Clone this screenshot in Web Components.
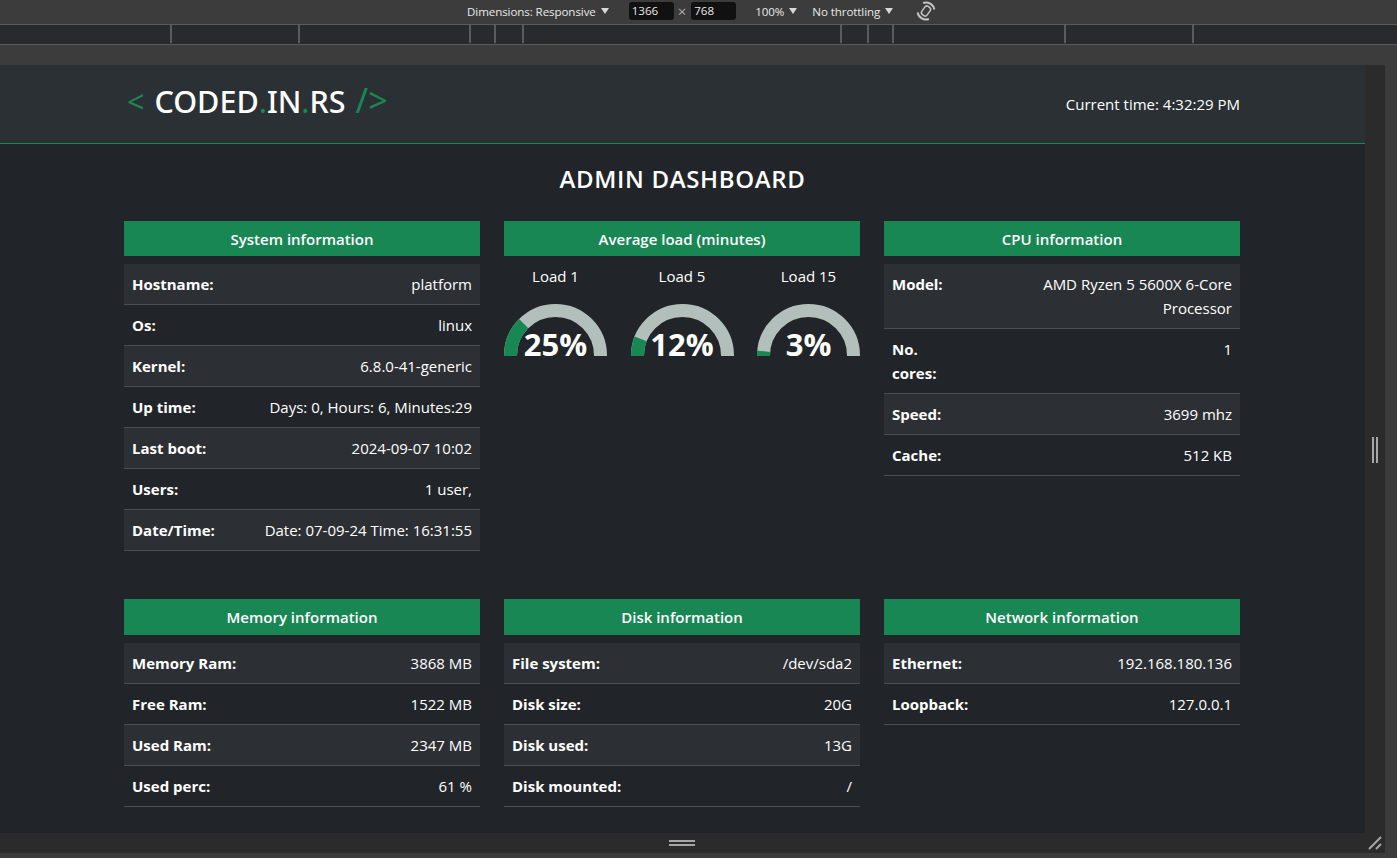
<!DOCTYPE html>
<html lang="en">
<head>
<meta charset="utf-8">
<title>Admin dashboard</title>
<style>
  html, body { margin: 0; height: 100%; background: #3c3c3c; overflow: hidden; }
  body { font-family: "Open Sans", "Noto Sans", sans-serif; }
</style>
</head>
<body>
<devtools-frame>
  <admin-page>
    <site-header time="Current time: 4:32:29 PM"></site-header>
    <page-title>ADMIN DASHBOARD</page-title>
    <card-grid>
      <info-card title="System information">
        <info-row label="Hostname:">platform</info-row>
        <info-row label="Os:">linux</info-row>
        <info-row label="Kernel:">6.8.0-41-generic</info-row>
        <info-row label="Up time:">Days: 0, Hours: 6, Minutes:29</info-row>
        <info-row label="Last boot:">2024-09-07 10:02</info-row>
        <info-row label="Users:">1 user,</info-row>
        <info-row label="Date/Time:">Date: 07-09-24 Time: 16:31:55</info-row>
      </info-card>
      <info-card title="Average load (minutes)">
        <load-gauges>
          <load-gauge label="Load 1" value="25"></load-gauge>
          <load-gauge label="Load 5" value="12"></load-gauge>
          <load-gauge label="Load 15" value="3"></load-gauge>
        </load-gauges>
      </info-card>
      <info-card title="CPU information" style="--label-width: 60px; --label-wrap: normal; --value-width: 212px">
        <info-row label="Model:">AMD Ryzen 5 5600X 6-Core Processor</info-row>
        <info-row label="No. cores:">1</info-row>
        <info-row label="Speed:">3699 mhz</info-row>
        <info-row label="Cache:">512 KB</info-row>
      </info-card>
      <info-card title="Memory information" style="--head-height: 36px">
        <info-row label="Memory Ram:">3868 MB</info-row>
        <info-row label="Free Ram:">1522 MB</info-row>
        <info-row label="Used Ram:">2347 MB</info-row>
        <info-row label="Used perc:">61 %</info-row>
      </info-card>
      <info-card title="Disk information" style="--head-height: 36px">
        <info-row label="File system:">/dev/sda2</info-row>
        <info-row label="Disk size:">20G</info-row>
        <info-row label="Disk used:">13G</info-row>
        <info-row label="Disk mounted:">/</info-row>
      </info-card>
      <info-card title="Network information" style="--head-height: 36px">
        <info-row label="Ethernet:">192.168.180.136</info-row>
        <info-row label="Loopback:">127.0.0.1</info-row>
      </info-card>
    </card-grid>
  </admin-page>
</devtools-frame>

<script>
// helper, every element here is just a shadow root + a template string
function shadow(el, html) {
  el.attachShadow({ mode: "open" }).innerHTML = html;
}

class DevtoolsFrame extends HTMLElement {
  constructor() {
    super();
    // ruler ticks, widths are the distance between two ticks
    const ticks = [172, 128, 171, 25, 28, 318, 27, 25, 172, 128]
      .map((w) => `<i style="width:${w}px"></i>`)
      .join("");
    shadow(this, `
      <style>
        :host { display: flex; flex-direction: column; height: 858px; background: #3c3c3c; color: #e8e8e8; font: 12px "Open Sans", sans-serif; }
        .toolbar { height: 22px; display: flex; align-items: center; justify-content: flex-start; border-bottom: 1px solid #5b5b5b; box-sizing: content-box; padding: 0 0 2px 467px; flex: none; }
        .toolbar span { font-size: 11.6px; white-space: nowrap; letter-spacing: -0.1px; }
        .caret { width: 0; height: 0; border: 4px solid transparent; border-top: 6px solid #d8d8d8; border-bottom: 0; margin-left: 5px; }
        .num { width: 42px; height: 18px; line-height: 18px; padding-left: 3px; background: #111; border-radius: 3px; font-size: 11.6px; }
        .ruler { height: 19px; background: #292a2d; border-bottom: 1px solid #5b5b5b; display: flex; flex: none; }
        .ruler i { display: block; height: 18px; box-sizing: border-box; border-right: 2px solid #5b5b5b; flex: none; }
        .gap { height: 20px; flex: none; }
        .middle { display: flex; flex: none; height: 768px; }
        .view { width: 1365px; height: 768px; overflow: hidden; flex: none; }
        .side { width: 20px; background: #2b2b2b; display: flex; align-items: center; justify-content: center; gap: 2px; padding-top: 1px; box-sizing: border-box; }
        .side b { width: 2px; height: 26px; background: #a6a6a6; }
        .bottom { width: 1385px; height: 20px; background: #2b2b2b; display: flex; align-items: center; justify-content: center; position: relative; flex: none; }
        .bars { width: 26px; height: 6px; border-top: 2px solid #a6a6a6; border-bottom: 2px solid #a6a6a6; box-sizing: border-box; margin-right: 21px; }
        .corner { position: absolute; right: 3px; top: 3px; }
      </style>
      <div class="toolbar">
        <span>Dimensions: Responsive</span><div class="caret"></div>
        <div class="num" style="margin-left:20px">1366</div>
        <span style="margin:0 5px 0 4px;color:#aaa;font-size:15px">×</span>
        <div class="num">768</div>
        <span style="margin-left:19px">100%</span><div class="caret"></div>
        <span style="margin-left:15px">No throttling</span><div class="caret"></div>
        <svg style="margin-left:23px" width="20" height="20" viewBox="0 0 20 20" fill="none" stroke="#c4c4c4" stroke-width="1.5">
          <rect x="6.75" y="5" width="6.5" height="10" rx="2.5" transform="rotate(35 10 10)"/>
          <path d="M7.09 2.01A8.5 8.5 0 0 1 18.37 8.52M12.91 17.99A8.5 8.5 0 0 1 1.63 11.48" stroke-width="2"/>
        </svg>
      </div>
      <div class="ruler">${ticks}</div>
      <div class="gap"></div>
      <div class="middle">
        <div class="view"><slot></slot></div>
        <div class="side"><b></b><b></b></div>
      </div>
      <div class="bottom">
        <div class="bars"></div>
        <svg class="corner" width="14" height="14" viewBox="0 0 14 14" stroke="#a6a6a6" stroke-width="2">
          <path d="M1 13 13 1M8 13l5-5"/>
        </svg>
      </div>
    `);
  }
}

class AdminPage extends HTMLElement {
  constructor() {
    super();
    shadow(this, `
      <style>
        :host { display: block; height: 768px; background: #212529; color: #fff; font: 15px/24px "Open Sans", "Noto Sans", sans-serif; }
      </style>
      <slot></slot>
    `);
  }
}

class SiteHeader extends HTMLElement {
  constructor() {
    super();
    shadow(this, `
      <style>
        :host { display: block; background: #2b3035; border-bottom: 1px solid #198754; }
        .inner { width: 1116px; margin-left: 124px; height: 78px; display: flex; align-items: center; justify-content: space-between; }
        .logo { font-family: "Noto Sans", "Open Sans", sans-serif; font-size: 30.5px; line-height: 1; padding-left: 3px; margin-bottom: 9px; white-space: nowrap; font-weight: 500; display: flex; align-items: baseline; }
        .g { color: #198754; font-weight: 400; }
        .lt { margin-right: 10px; }
        .end { margin-left: 10px; font-size: 34px; line-height: 1; }
      </style>
      <div class="inner">
        <div class="logo"><span class="g lt">&lt;</span>CODED<span class="g">.</span>IN<span class="g">.</span>RS<span class="g end">/&gt;</span></div>
        <div class="time">${this.getAttribute("time")}</div>
      </div>
    `);
  }
}

class PageTitle extends HTMLElement {
  constructor() {
    super();
    shadow(this, `
      <style>
        :host { display: block; text-align: center; font-size: 24px; line-height: 30px; font-weight: 600; letter-spacing: 0.65px; padding: 20px 0 27px; }
      </style>
      <slot></slot>
    `);
  }
}

class CardGrid extends HTMLElement {
  constructor() {
    super();
    shadow(this, `
      <style>
        :host { display: grid; grid-template-columns: repeat(3, 356px); column-gap: 24px; row-gap: 48px; grid-template-rows: 330px auto; width: 1116px; margin-left: 124px; }
      </style>
      <slot></slot>
    `);
  }
}

class InfoCard extends HTMLElement {
  constructor() {
    super();
    shadow(this, `
      <style>
        :host { display: block; }
        h2 { margin: 0 0 8px; height: var(--head-height, 35px); line-height: 36px; background: #198754; color: #fff; font-size: 15px; font-weight: 600; text-align: center; }
        ::slotted(info-row:nth-child(odd)) { background: #2c3035; }
      </style>
      <h2>${this.getAttribute("title")}</h2>
      <slot></slot>
    `);
  }
}

class InfoRow extends HTMLElement {
  constructor() {
    super();
    shadow(this, `
      <style>
        :host { display: flex; justify-content: space-between; gap: 8px; padding: 8px; border-bottom: 1px solid #495057; }
        .label { font-weight: 700; flex: 0 0 var(--label-width, auto); white-space: var(--label-wrap, nowrap); }
        .value { flex: 0 1 var(--value-width, 100%); text-align: right; }
      </style>
      <div class="label">${this.getAttribute("label")}</div>
      <div class="value"><slot></slot></div>
    `);
  }
}

class LoadGauges extends HTMLElement {
  constructor() {
    super();
    shadow(this, `
      <style>
        :host { display: flex; justify-content: space-between; }
      </style>
      <slot></slot>
    `);
  }
}

class LoadGauge extends HTMLElement {
  constructor() {
    super();
    const value = Number(this.getAttribute("value"));
    // arc end for the value, 0% is on the left of the half circle
    const angle = (value / 100) * Math.PI;
    const r = 45;
    const cx = 51.5;
    const x = (cx - r * Math.cos(angle)).toFixed(2);
    const y = (51.5 - r * Math.sin(angle)).toFixed(2);
    shadow(this, `
      <style>
        :host { display: block; width: 103px; text-align: center; }
        .label { height: 24px; }
        .dial { display: grid; margin-top: 16px; height: 52px; }
        .dial > * { grid-area: 1 / 1; }
        svg { display: block; }
        .pct { align-self: end; font-size: 31px; line-height: 31px; font-weight: 700; margin-bottom: -4px; }
      </style>
      <div class="label">${this.getAttribute("label")}</div>
      <div class="dial">
        <svg width="103" height="52" viewBox="0 0 103 52" fill="none" stroke-width="13">
          <path d="M6.5 52V51.5A45 45 0 0 1 96.5 51.5V52" stroke="#b2bfbb"/>
          <path d="M6.5 52V51.5A45 45 0 0 1 ${x} ${y}" stroke="#198754"/>
        </svg>
        <div class="pct">${value}%</div>
      </div>
    `);
  }
}

customElements.define("devtools-frame", DevtoolsFrame);
customElements.define("admin-page", AdminPage);
customElements.define("site-header", SiteHeader);
customElements.define("page-title", PageTitle);
customElements.define("card-grid", CardGrid);
customElements.define("info-card", InfoCard);
customElements.define("info-row", InfoRow);
customElements.define("load-gauges", LoadGauges);
customElements.define("load-gauge", LoadGauge);
</script>
</body>
</html>
